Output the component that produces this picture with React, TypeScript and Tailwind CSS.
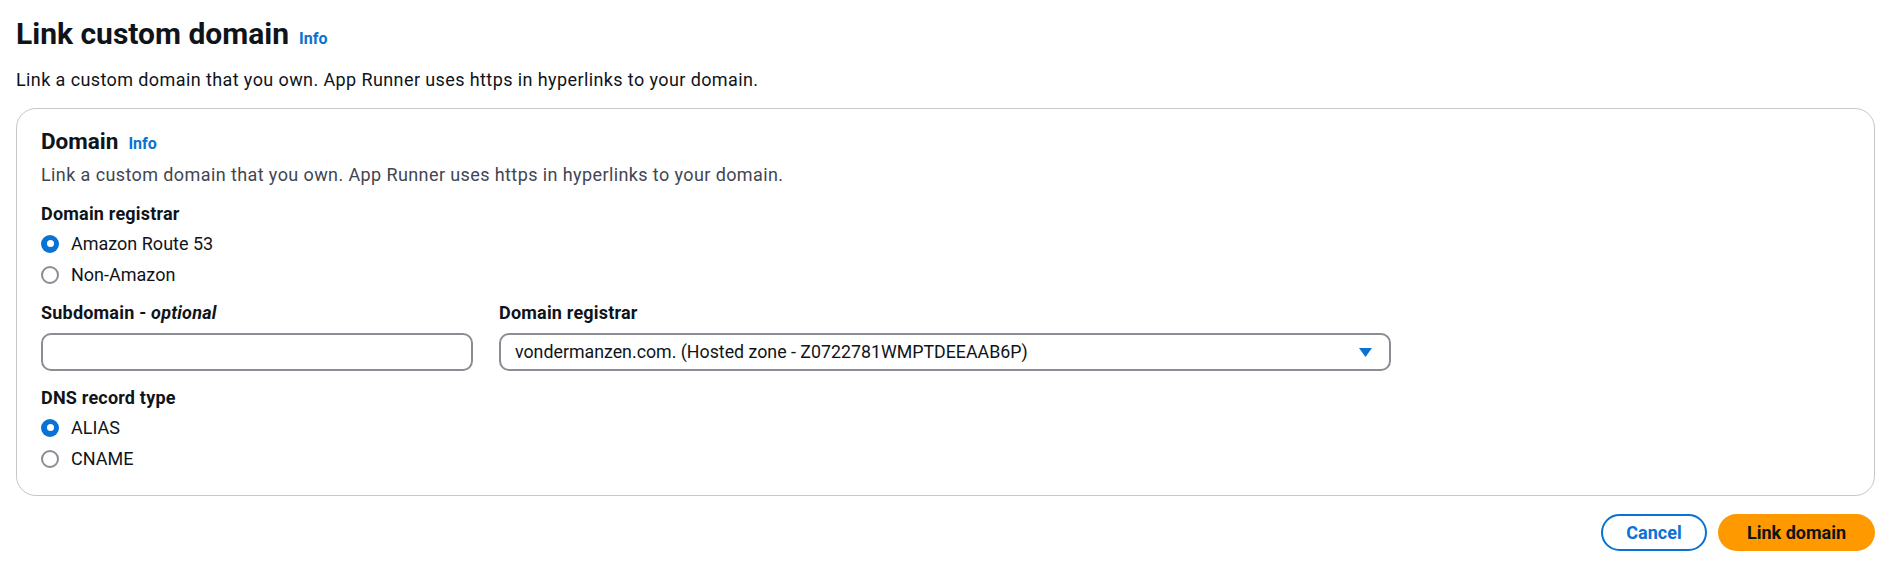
import React, { useState } from 'react'

const font = { fontFamily: 'Roboto, "Noto Sans", sans-serif' }

const body = 'text-[18px] leading-[24px] tracking-[0.4px]'
const label = 'text-[18px] leading-[24px] tracking-[0.2px] font-bold'

function Radio({ text, checked, onSelect }: { text: string; checked: boolean; onSelect: () => void }) {
  return (
    <label className="flex items-center gap-[12px] h-[31px] cursor-pointer" onClick={onSelect}>
      {checked ? (
        <span className="w-[18px] h-[18px] rounded-full bg-[#0972d3] flex items-center justify-center">
          <span className="w-[7px] h-[7px] rounded-full bg-white" />
        </span>
      ) : (
        <span className="w-[18px] h-[18px] rounded-full border-2 border-[#8c8c94] bg-white" />
      )}
      <span className="text-[18px] leading-[24px] text-[#0f141a]">{text}</span>
    </label>
  )
}

function Info() {
  return <a className="text-[16px] font-bold text-[#0972d3] cursor-pointer">Info</a>
}

export default function App() {
  const [registrar, setRegistrar] = useState('route53')
  const [recordType, setRecordType] = useState('alias')

  return (
    <div className="w-[1891px] h-[568px] bg-white px-4 pt-4 text-[#0f141a]" style={font}>
      {/* Page header */}
      <div className="flex items-baseline gap-[10px]">
        <h1 className="text-[30px] leading-[36px] font-bold">Link custom domain</h1>
        <Info />
      </div>
      <p className={`${body} mt-[16px]`}>
        Link a custom domain that you own. App Runner uses https in hyperlinks to your domain.
      </p>

      {/* Container */}
      <div className="mt-[16px] border border-[#c6c6cd] rounded-[20px] px-6 pt-[18px] pb-6 h-[388px]">
        <div className="flex items-baseline gap-[10px]">
          <h2 className="text-[22.5px] leading-[28px] font-bold">Domain</h2>
          <Info />
        </div>
        <p className={`${body} mt-[7px] text-[#424650]`}>
          Link a custom domain that you own. App Runner uses https in hyperlinks to your domain.
        </p>

        <div className="mt-[15px]">
          <div className={label}>Domain registrar</div>
          <div className="mt-[2px]">
            <Radio text="Amazon Route 53" checked={registrar === 'route53'} onSelect={() => setRegistrar('route53')} />
            <Radio text="Non-Amazon" checked={registrar === 'other'} onSelect={() => setRegistrar('other')} />
          </div>
        </div>

        <div className="flex gap-[26px] mt-[11px]">
          <div className="w-[432px]">
            <div className={label}>
              Subdomain - <i className="font-bold">optional</i>
            </div>
            <input
              type="text"
              className="mt-[8px] w-full h-[38px] rounded-[10px] border-2 border-[#8c8c94] px-4 text-[18px] outline-none"
            />
          </div>
          <div className="w-[892px]">
            <div className={label}>Domain registrar</div>
            <button className="mt-[8px] w-full h-[38px] rounded-[10px] border-2 border-[#8c8c94] pl-[14px] pr-[17px] flex items-center justify-between">
              <span className="text-[17.8px] leading-[24px]">vondermanzen.com. (Hosted zone - Z0722781WMPTDEEAAB6P)</span>
              <svg width="13" height="9" viewBox="0 0 13 9">
                <path d="M0 0 H13 L6.5 9 Z" fill="#0972d3" />
              </svg>
            </button>
          </div>
        </div>

        <div className="mt-[15px]">
          <div className={label}>DNS record type</div>
          <div className="mt-[2px]">
            <Radio text="ALIAS" checked={recordType === 'alias'} onSelect={() => setRecordType('alias')} />
            <Radio text="CNAME" checked={recordType === 'cname'} onSelect={() => setRecordType('cname')} />
          </div>
        </div>
      </div>

      {/* Actions */}
      <div className="flex justify-end gap-[11px] mt-[18px]">
        <button className="w-[106px] h-[37px] rounded-full border-2 border-[#0972d3] text-[#0972d3] font-bold text-[18px]">
          Cancel
        </button>
        <button className="w-[157px] h-[37px] rounded-full bg-[#ff9900] text-[#0f141a] font-bold text-[18px]">
          Link domain
        </button>
      </div>
    </div>
  )
}
